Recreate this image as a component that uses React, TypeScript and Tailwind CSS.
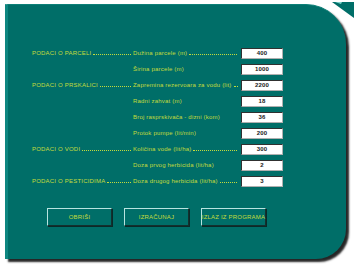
const rows: { left?: string; label: string; leader: boolean; value: string }[] = [
  { left: 'PODACI O PARCELI', label: 'Dužina parcele (m)', leader: true, value: '400' },
  { label: 'Širina parcele (m)', leader: false, value: '1000' },
  { left: 'PODACI O PRSKALICI', label: 'Zapremina rezervoara za vodu (lit)', leader: true, value: '2200' },
  { label: 'Radni zahvat (m)', leader: false, value: '18' },
  { label: 'Broj rasprskivača - dizni (kom)', leader: false, value: '36' },
  { label: 'Protok pumpe (lit/min)', leader: false, value: '200' },
  { left: 'PODACI O VODI', label: 'Količina vode (lit/ha)', leader: true, value: '300' },
  { label: 'Doza prvog herbicida (lit/ha)', leader: false, value: '2' },
  { left: 'PODACI O PESTICIDIMA', label: 'Doza drugog herbicida (lit/ha)', leader: true, value: '3' },
]

function Leader() {
  return <span className="mx-[2px] mb-[1px] min-w-[4px] flex-1 self-end border-b border-dotted border-[#c4dc3c]" />
}

function Btn({ children }: { children: string }) {
  return (
    <button
      type="button"
      className="flex h-[18px] w-[65px] items-center justify-center whitespace-nowrap border border-t-[#b8e4e0] border-l-[#b8e4e0] border-b-[#14302e] border-r-[#14302e] text-[6px] tracking-[0.2px] text-[#c4dc3c] shadow-[1px_1px_0_#0a2a28]"
    >
      {children}
    </button>
  )
}

export default function App() {
  return (
    <div className="relative h-[266px] w-[354px] overflow-hidden bg-white font-['Liberation_Sans',Arial,sans-serif]">
      {/* kleiner trokut gore desno */}
      <svg className="absolute top-0 right-0" width="22" height="18" viewBox="0 0 22 18">
        <polygon points="0,2 22,2 22,18" fill="#006e68" />
        <polygon points="3,2 10,2 9,4" fill="#7fd4cc" />
      </svg>
      <div className="ml-[5px] mt-[4px] flex h-[255px] w-[341px] flex-col rounded-tr-[40px] rounded-br-[30px] border-l-[3px] border-t border-l-[#0d8680] border-t-[#0d8078] bg-[#006e68] pl-[24px] pt-[40px] shadow-[3px_3px_2px_rgba(0,0,0,0.85)]">
        <div className="flex flex-col">
          {rows.map((r, i) => (
            <div key={i} className="flex h-[16px] items-center text-[6px] leading-none tracking-[0.2px] text-[#c4dc3c]">
              <div className="flex w-[101px] whitespace-nowrap">
                {r.left && (
                  <>
                    <span>{r.left}</span>
                    <Leader />
                  </>
                )}
              </div>
              <div className="flex w-[106px] whitespace-nowrap">
                <span>{r.label}</span>
                {r.leader && <Leader />}
              </div>
              <div className="ml-[2px] flex h-[11px] w-[42px] items-center justify-center border border-t-[#303030] border-l-[#303030] border-b-[#b0b0b0] border-r-[#b0b0b0] bg-white text-[6px] font-bold text-[#202020]">
                {r.value}
              </div>
            </div>
          ))}
        </div>
        <div className="mt-[19px] flex gap-[12px] pl-[15px]">
          <Btn>OBRIŠI</Btn>
          <Btn>IZRAČUNAJ</Btn>
          <Btn>IZLAZ IZ PROGRAMA</Btn>
        </div>
      </div>
    </div>
  )
}
